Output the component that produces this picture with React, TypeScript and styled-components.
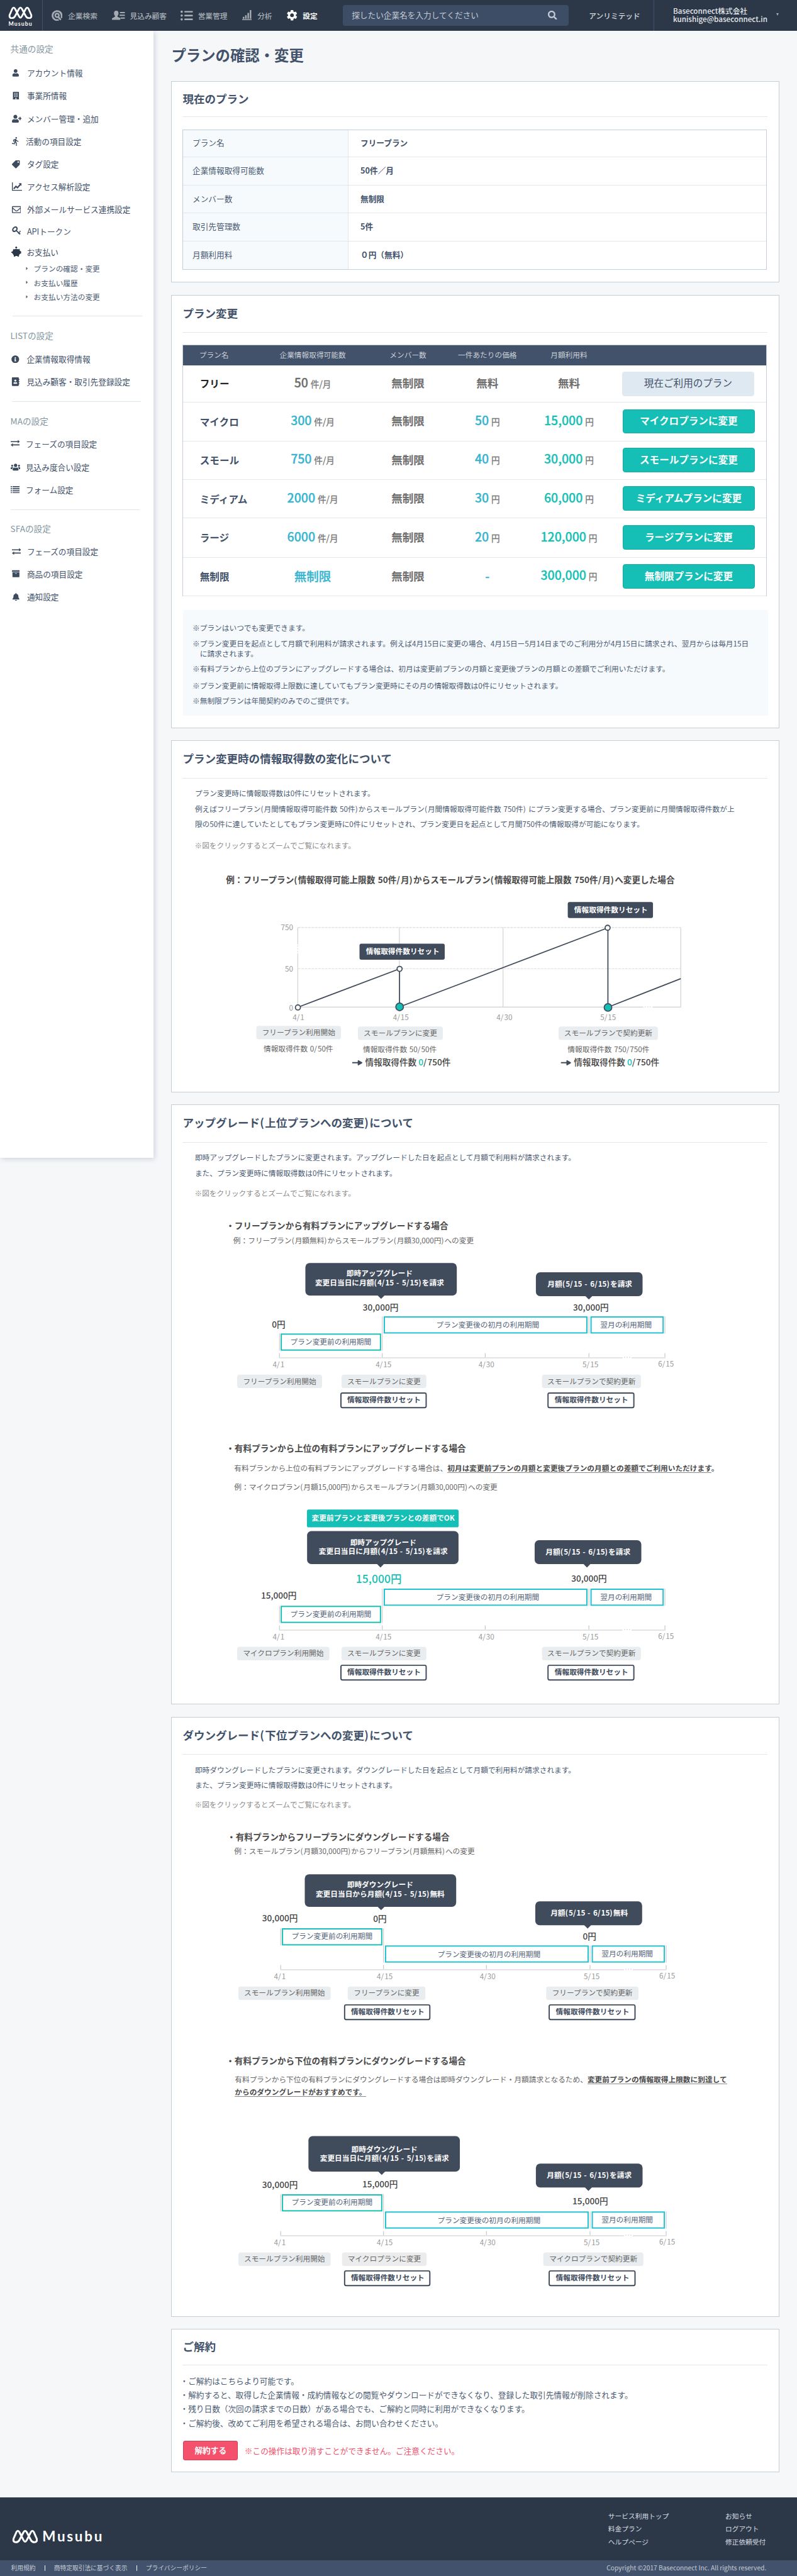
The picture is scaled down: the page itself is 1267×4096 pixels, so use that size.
import React from "react";
import styled, { createGlobalStyle } from "styled-components";
import {
  FaListUl, FaSearch, FaUser, FaBuilding, FaUserPlus, FaTag, FaRegEnvelope,
  FaInfoCircle, FaAddressBook, FaUsers, FaArchive, FaBell, FaCaretRight,
} from "react-icons/fa";
import { MdDirectionsRun, MdSettings } from "react-icons/md";

const FONT = '"Noto Sans CJK JP", "Noto Sans", sans-serif';
const NAVY = "#404b5c";
const TEAL = "#15bfb5";
const CYAN = "#1fc1d0";

const GlobalStyle = createGlobalStyle`
  html { background: #f5f7f9; }
  body { margin: 0; overflow: hidden; background: #f5f7f9; font-family: ${FONT}; }
  * { box-sizing: border-box; }
`;

const Page = styled.div`
  zoom: 0.9746;
  width: 1300px;
  font-family: ${FONT};
  font-size: 13px;
  color: #42526b;
  white-space: nowrap;
  svg { display: block; flex: none; }
`;

/* ---------- header ---------- */
const Header = styled.header`
  display: flex;
  align-items: center;
  height: 50px;
  background: #2c3848;
  color: #a9b0b8;
`;
const Brand = styled.div`
  display: flex;
  flex-direction: column;
  align-items: center;
  gap: 3px;
  width: 70px;
  height: 50px;
  padding: 10px 2px 0 0;
  border-right: 1px solid #42526b;
`;
const BrandName = styled.span`
  font: 700 9px/10px Lato, sans-serif;
  letter-spacing: 1.1px;
  color: #fff;
`;
const NavItem = styled.div<{ $ml: number; $gap: number; $active?: boolean }>`
  display: flex;
  align-items: center;
  gap: ${(p) => p.$gap}px;
  margin-left: ${(p) => p.$ml}px;
  font-size: 12px;
  line-height: 18px;
  font-weight: ${(p) => (p.$active ? 700 : 500)};
  color: ${(p) => (p.$active ? "#fff" : "#a9b0b8")};
`;
const SearchBox = styled.div`
  display: flex;
  align-items: center;
  justify-content: space-between;
  width: 369px;
  height: 34px;
  margin-left: 41px;
  padding: 0 19px 1px 15px;
  border-radius: 4px;
  background: #3d4d66;
  color: #c3cad3;
`;
const PlanName = styled.div`
  width: 138px;
  padding-left: 33px;
  font-size: 12px;
  font-weight: 500;
  color: #d3d8de;
`;
const Account = styled.div`
  display: flex;
  align-items: center;
  flex: 1;
  justify-content: space-between;
  height: 50px;
  padding: 0 30px 2px 31px;
  border-left: 1px solid #42526b;
  font-size: 12px;
  line-height: 14px;
  font-weight: 500;
  color: #e6e9ed;
`;
const Caret = styled.span`
  border: 3px solid transparent;
  border-top: 5px solid #a9a9a9;
  border-bottom: 0;
`;

/* ---------- frame ---------- */
const Body = styled.div`
  display: flex;
  align-items: flex-start;
  height: 4024px;
`;
const Sidebar = styled.nav`
  width: 250px;
  height: 1839px;
  padding-top: 20px;
  background: #fff;
  box-shadow: 2px 2px 8px rgba(60, 75, 95, 0.2);
  clip-path: inset(0 -12px -12px 0);
`;
const GroupTitle = styled.div<{ $mt: number }>`
  margin-top: ${(p) => p.$mt}px;
  padding-left: 17px;
  font-size: 14px;
  line-height: 20px;
  font-weight: 400;
  color: #82959f;
`;
const Item = styled.div<{ $mt: number; $x?: number }>`
  display: flex;
  align-items: center;
  height: 20px;
  margin-top: ${(p) => p.$mt}px;
  padding-left: ${(p) => p.$x ?? 19}px;
  line-height: 18px;
  color: #42526b;
`;
const IconSlot = styled.span`
  width: 25px;
  color: #3d4b5f;
`;
const TurnedTag = styled(FaTag)`
  transform: rotate(90deg);
`;
const SubItem = styled.div<{ $mt: number }>`
  display: flex;
  align-items: center;
  gap: 9px;
  height: 18px;
  margin-top: ${(p) => p.$mt}px;
  padding-left: 42px;
  font-size: 12px;
  color: #4b5b73;
  svg { width: 4px; }
`;
const Rule = styled.hr<{ $mt?: number; $x: number }>`
  width: 211px;
  height: 1px;
  margin: ${(p) => p.$mt ?? 22}px 0 0 ${(p) => p.$x}px;
  border: 0;
  background: #dde7ee;
`;
const Main = styled.main`
  width: 992px;
  margin-left: 29px;
`;
const PageTitle = styled.h1`
  height: 82px;
  margin: 0;
  font-size: 24px;
  line-height: 79px;
  font-weight: 700;
  padding-left: 0.5px;
`;
const Card = styled.section<{ $h: number }>`
  height: ${(p) => p.$h}px;
  margin-bottom: 20px;
  border: 1px solid #c2ced8;
  background: #fff;
`;
const CardHead = styled.h2<{ $h?: number }>`
  height: ${(p) => p.$h ?? 61}px;
  margin: 0 18px;
  border-bottom: 1px solid #dfe8ef;
  font-size: 18px;
  line-height: ${(p) => (p.$h ?? 61) - 3}px;
  font-weight: 700;
`;

/* ---------- current plan ---------- */
const InfoTable = styled.dl`
  display: grid;
  grid-template-columns: 269px 1fr;
  grid-template-rows: 45px 46px 45px 46px 45px;
  margin: 20px 19px 0 18px;
  border: 1px solid #c2ced8;
`;
const InfoLabel = styled.dt`
  display: flex;
  align-items: center;
  padding: 0 0 3px 15px;
  border-right: 1px solid #dfe8ef;
  background: #f6fafd;
  color: #4b5b73;
  &:not(:nth-last-of-type(1)) { border-bottom: 1px solid #dfe8ef; }
`;
const InfoValue = styled.dd`
  display: flex;
  align-items: center;
  margin: 0;
  padding: 0 0 3px 20px;
  font-weight: 700;
  &:not(:nth-last-of-type(1)) { border-bottom: 1px solid #dfe8ef; }
`;

/* ---------- plan table ---------- */
const PlanTable = styled.div`
  margin: 19px 19px 0 18px;
  border: solid #c2ced8;
  border-width: 1px 1px 0;
`;
const PlanRow = styled.div<{ $h: number; $head?: boolean }>`
  display: grid;
  grid-template-columns: 126px 170px 141px 118px 148px 1fr;
  align-items: center;
  justify-items: center;
  height: ${(p) => p.$h}px;
  ${(p) =>
    p.$head
      ? "background: #42526a; color: #c9cfd7; font-size: 12px; padding: 0 3px 2px 0;"
      : "border-bottom: 1px solid #dfe8ef;"}
`;
const PlanLabel = styled.div<{ $dark?: boolean; $small?: boolean }>`
  justify-self: start;
  padding-left: ${(p) => (p.$small ? 26 : 27)}px;
  font-size: ${(p) => (p.$small ? 12 : 16)}px;
  line-height: 24px;
  font-weight: ${(p) => (p.$small ? 400 : 700)};
  ${(p) => p.$dark && "color: #222;"}
`;
const Amount = styled.div<{ $c?: string; $size?: number }>`
  font-size: ${(p) => p.$size ?? 20}px;
  line-height: 30px;
  padding-bottom: 3px;
  font-weight: ${(p) => (p.$size ? 700 : 500)};
  color: ${(p) => p.$c ?? "#6e6e6e"};
  -webkit-text-stroke: ${(p) => (p.$size ? 0 : 0.3)}px;
`;
const Unit = styled.span`
  margin-left: 4px;
  font-size: 14px;
  font-weight: 400;
  color: #777;
`;
const PlanButton = styled.button<{ $current?: boolean }>`
  width: 215px;
  height: 40px;
  margin: 0 ${(p) => (p.$current ? "7px 0" : "5px 1px")} 0;
  padding: 0 0 2px;
  border: 1px solid ${(p) => (p.$current ? "#dfe9f2" : "#16aaa1")};
  border-radius: 4px;
  background: ${(p) => (p.$current ? "#dfe9f2" : TEAL)};
  color: ${(p) => (p.$current ? "#42526b" : "#fff")};
  font: ${(p) => (p.$current ? 400 : 700)} 16px/24px ${FONT};
`;
const Notes = styled.div`
  height: 173px;
  margin: 22px 17px 0 19px;
  padding: 21px 0 0 15px;
  background: #f6fafd;
  font-size: 12px;
  line-height: 16px;
  color: #4b5b73;
`;
const Note = styled.p<{ $mt?: number }>`
  margin: ${(p) => p.$mt ?? 0}px 0 0;
  padding-left: 12px;
  text-indent: -12px;
`;

/* ---------- explanations ---------- */
const Lead = styled.p`
  margin: 12px 0 0 38px;
  font-size: 12px;
  line-height: 25px;
  color: #4b5b73;
`;
const Hint = styled.p<{ $mt: number }>`
  margin: ${(p) => p.$mt}px 0 0 37.5px;
  font-size: 12px;
  line-height: 25px;
  color: #8c8c8c;
`;
const CaseTitle = styled.h3<{ $mt: number; $x?: number }>`
  margin: ${(p) => p.$mt}px 0 0 ${(p) => p.$x ?? 88.5}px;
  font-size: 14px;
  line-height: 20px;
  font-weight: 700;
  color: #4a4a4a;
`;
const CaseText = styled.p<{ $mt: number; $x?: number; $lh?: number }>`
  margin: ${(p) => p.$mt}px 0 0 ${(p) => p.$x ?? 102}px;
  font-size: 12px;
  line-height: ${(p) => p.$lh ?? 20}px;
  color: #666;
`;
const Strong = styled.b`
  font-weight: 700;
  color: #4a4a4a;
  box-shadow: inset 0 -1px #8a8a8a;
`;
const Bold = styled.b`
  font-weight: 700;
  color: #4a4a4a;
`;
const Loose = styled.span`
  letter-spacing: 0.09em;
`;

/* ---------- cancel ---------- */
const CancelList = styled.ul`
  margin: 14px 0 0 14px;
  padding: 0;
  list-style: none;
  line-height: 23px;
  color: #4b5b73;
`;
const CancelRow = styled.div`
  display: flex;
  align-items: center;
  gap: 11px;
  margin: 17px 0 0 19px;
  color: #f4516c;
`;
const CancelButton = styled.button`
  width: 89px;
  height: 32px;
  padding: 0 0 1px;
  border: 1px solid #cf3f59;
  border-radius: 3px;
  background: #f4516c;
  color: #fff;
  font: 700 13px/20px ${FONT};
`;

/* ---------- footer ---------- */
const Footer = styled.footer`
  display: flex;
  justify-content: space-between;
  height: 103px;
  padding: 22px 0 0 20px;
  background: #2c3848;
  color: #d8dce1;
`;
const FooterBrand = styled.div`
  display: flex;
  align-items: center;
  gap: 6px;
  height: 64px;
  padding-top: 20px;
  align-self: flex-start;
`;
const FooterName = styled.span`
  font: 700 23px/26px Lato, sans-serif;
  letter-spacing: 2.8px;
  color: #fff;
`;
const FooterLinks = styled.div`
  display: grid;
  grid-template-columns: 191px 117px;
  grid-auto-rows: 21px;
  font-size: 11px;
  line-height: 18px;
`;
const LegalBar = styled.div`
  display: flex;
  align-items: center;
  height: 27px;
  padding: 0 50px 3px 18px;
  background: #42526c;
  font-size: 10px;
  color: #c3cad3;
`;
const LegalLink = styled.span`
  & + & {
    margin-left: 15px;
    padding-left: 15px;
    background: linear-gradient(#fff, #fff) 0 60% / 1px 9px no-repeat;
  }
`;
const Copyright = styled.span`
  margin-left: auto;
  font-size: 10.5px;
`;

/* ---------- icons ---------- */
const Mark = ({ w }: { w: number }) => (
  <svg width={w} height={(w * 23) / 44} viewBox="0 0 44 23" fill="none" stroke="#fff" strokeWidth="3.2" strokeLinejoin="round">
    <path d="M2.6 15.5 7.4 4.5Q9.8.2 12.4 4.5L19.4 18Q22 22.8 24.6 18L31.6 4.5Q34.2.2 36.6 4.5L41.4 15.5Q42.5 21.3 37.5 21.3Q33.5 21.3 31.5 17.5L24.6 4.5Q22 .2 19.4 4.5L12.5 17.5Q10.5 21.3 6.5 21.3Q1.5 21.3 2.6 15.5Z" />
  </svg>
);
const CompanyIcon = () => (
  <svg width="18" height="18" viewBox="0 0 18 18" fill="none" stroke="#a4abb3">
    <path d="M11.5 16A7.4 7.4 0 1 1 16.4 9V13" strokeWidth="2.9" />
    <circle cx="9" cy="8.6" r="3" strokeWidth="2.6" />
    <path d="M10.6 10.8 15 16" strokeWidth="2.8" />
  </svg>
);
const LeadIcon = () => (
  <svg width="21" height="16" viewBox="0 0 21 16" fill="#a4abb3">
    <path d="M7 0c2.4 0 3.7 1.7 3.7 4S9.6 7.800 9 8.600c0 1.600 0 1.800 4.600 3.400V15H0v-2.500c4-2 5-2 5-3.900C4.300 7.800 3.300 6.300 3.300 4S4.600 0 7 0ZM13 2h8v2.200h-8zM12.400 6.400H21v2.200h-8.600zM14 11h7v2.200h-7z" />
  </svg>
);
const BarsIcon = () => (
  <svg width="16" height="17" viewBox="0 0 16 17" fill="#a4abb3">
    <path d="M1 11h2.500v3H1zM4.800 8.500h2.500V14H4.800zM8.600 4.500h2.500V14H8.600zM12.400 0h2.500v14h-2.500zM0 15h16v1.500H0z" />
  </svg>
);
const GrowthIcon = () => (
  <svg width="17" height="14" viewBox="0 0 17 14" fill="none" stroke="currentColor">
    <path d="M.7 0v13H17" strokeWidth="1.400" />
    <path d="M3 10.500 6.500 6.500 9 8.600 13.500 3.600" strokeWidth="2.300" />
    <path d="M10.800 1.200h4.700v4.700z" fill="currentColor" stroke="none" />
  </svg>
);
const KeyIcon = () => (
  <svg width="15" height="14" viewBox="0 0 15 14" fill="none" stroke="currentColor">
    <ellipse cx="4.800" cy="4.600" rx="4" ry="2.900" transform="rotate(-48 4.800 4.600)" strokeWidth="2.200" />
    <path d="M6.800 6.500 13.500 12.800M10.500 12l2-2.300M12.500 9l1.300-1.500" strokeWidth="1.900" />
  </svg>
);
const PiggyIcon = () => (
  <svg width="17" height="17" viewBox="0 0 17 17" fill="#2c3848">
    <circle cx="8" cy="1.600" r="1.600" />
    <path d="M3 4l1.800.5Q8 3 11.400 4.500L13.600 3.700V6.500L16 8.300V11L13.700 12.200 12.500 14V16.500H10V15.300H6.500V16.500H4V14Q2.300 12.600 2 11L0 10V8.500L2 8.200Q2.200 7 3 6Z" />
  </svg>
);
const SwapIcon = () => (
  <svg width="15" height="12" viewBox="0 0 15 12" fill="currentColor">
    <path d="M0 2.500h11.500V.5L15 3.400 11.500 6V4.200H0zM15 7.800H3.500V6L0 8.800l3.500 2.700V9.600H15z" />
  </svg>
);
const RowsIcon = () => (
  <svg width="15" height="12" viewBox="0 0 15 12" fill="currentColor">
    <path d="M0 0h2v1.800H0zM3 0h12v1.800H3zM0 3.300h2v1.800H0zM3 3.300h12v1.800H3zM0 6.600h2v1.800H0zM3 6.600h12v1.800H3zM0 10h2v1.800H0zM3 10h12v1.800H3z" />
  </svg>
);

/* Parentheses, slashes, hyphens and spaces are set slightly loose beside kanji. */
const pieces = (text: string) => text.split(/([()/\- ]+)/).filter(Boolean);
const isLoose = (s: string) => /^[()/\- ]/.test(s);
const Mixed = ({ children }: { children: string }) => (
  <>
    {pieces(children).map((s, i) => (isLoose(s) ? <Loose key={i}>{s}</Loose> : s))}
  </>
);

/* ---------- figures ---------- */
type TextProps = { x: number; y: number; s?: number; w?: number; c?: string; a?: "start" | "middle" | "end"; children: React.ReactNode };
/* y is the optical centre of the line */
const T = ({ x, y, s = 12, w = 400, c = "#666", a = "middle", children }: TextProps) => (
  <text x={x} y={y + s * 0.37} fontSize={s} fontWeight={w} fill={c} textAnchor={a} fontFamily={FONT}>
    {typeof children === "string"
      ? pieces(children).map((t, i) => (
          <tspan key={i} letterSpacing={isLoose(t) ? s * 0.09 : 0}>{t}</tspan>
        ))
      : children}
  </text>
);
const Tag = ({ x, y, w, h = 22, label, bg = "#e9edf0" }: { x: number; y: number; w: number; h?: number; label: string; bg?: string }) => (
  <g>
    <rect x={x} y={y} width={w} height={h} rx="4" fill={bg} />
    <T x={x + w / 2} y={y + h / 2 - 0.2}>{label}</T>
  </g>
);
const ResetBox = ({ x, y, w }: { x: number; y: number; w: number }) => (
  <g>
    <rect x={x + 1} y={y + 1} width={w - 2} height="24" rx="2.500" fill="#fff" stroke={NAVY} strokeWidth="2" />
    <T x={x + w / 2 + 0.8} y={y + 12.3} w={700} c={NAVY}>情報取得件数リセット</T>
  </g>
);
const ResetBadge = ({ x, y }: { x: number; y: number }) => (
  <g>
    <rect x={x} y={y} width="139" height="26" rx="3" fill={NAVY} />
    <T x={x + 70.5} y={y + 12.3} w={700} c="#fff">情報取得件数リセット</T>
  </g>
);
type CalloutData = { x: number; y: number; w: number; h: number; tip: number; tx: number; lines: string[]; ty: number };
const Callout = ({ x, y, w, h, tip, tx, lines, ty }: CalloutData) => (
  <g>
    <rect x={x} y={y} width={w} height={h} rx="7" fill={NAVY} />
    <path d={`M${tip - 6} ${y + h - 0.5}h12l-6 6z`} fill={NAVY} />
    {lines.map((l, i) => (
      <T key={i} x={tx} y={ty + i * 15} w={700} c="#fff">{l}</T>
    ))}
  </g>
);
type Price = { x: number; y: number; label: string; big?: boolean };
type TimelineProps = {
  top: number;
  height: number;
  axis: number;
  dx?: number;
  down?: boolean;
  badge?: string;
  callouts: CalloutData[];
  prices: Price[];
  tags: { x: number; w: number; label: string; bg?: string }[];
  resets: [number, number][];
};
const Timeline = ({ top, height, axis, dx = 0, down, badge, callouts, prices, tags, resets }: TimelineProps) => {
  const upper = axis - 68;
  const lower = axis - 40;
  const before = down ? upper : lower;
  const after = down ? lower : upper;
  return (
    <svg width="990" height={height} viewBox={`280 ${top} 990 ${height}`}>
      {badge && (
        <g>
          <rect x="500.500" y="2463" width="247.500" height="29" rx="3" fill={TEAL} />
          <T x={625} y={2477.2} w={700} c="#fff">{badge}</T>
        </g>
      )}
      {callouts.map((c, i) => <Callout key={i} {...c} />)}
      {prices.map((p, i) => (
        <T key={i} x={p.x} y={p.y} s={p.big ? 18 : 14} w={500} c={p.big ? TEAL : "#444"}>{p.label}</T>
      ))}
      <g transform={`translate(${dx} 0)`}>
        <g stroke="#c4c4c4" strokeWidth="1">
          <path d={`M455.700 ${before}v28M623.500 ${upper}v56M960.400 ${after}v28M1084.500 ${after}v28`} />
          <path d={`M455.700 ${axis - 8}v8M623.500 ${axis - 8}v8M791.300 ${axis - 8}v8M960.400 ${axis - 8}v8M1084.500 ${axis - 8}v8`} stroke="#bbb" />
        </g>
        <path d={`M455.200 ${axis - 0.3}H1015.500M1030 ${axis - 0.3}H1085`} stroke="#e4e4e4" strokeWidth="2" />
        <path d={`M1018 ${axis - 1}h10`} stroke="#ddd" strokeWidth="1.600" strokeDasharray="1.800 2.200" />
        <g fill="#fff" strokeWidth="2">
          <rect x="458.700" y={before + 1} width="161.800" height="26" stroke={TEAL} />
          <rect x="626.800" y={after + 1} width="330.400" height="26" stroke={CYAN} />
          <rect x="964" y={after + 1} width="117.500" height="26" stroke={CYAN} />
        </g>
        <T x={539.5} y={before + 13.4} c="#54647b">プラン変更前の利用期間</T>
        <T x={795.5} y={after + 14.4} c="#54647b">プラン変更後の初月の利用期間</T>
        <T x={1021} y={after + 13.6} c="#54647b">翌月の利用期間</T>
        <T x={454.3} y={axis + 10.4} c="#999">4/1</T>
        <T x={625.5} y={axis + 10.4} c="#999">4/15</T>
        <T x={793.3} y={axis + 10.4} c="#999">4/30</T>
        <T x={963} y={axis + 10.4} c="#999">5/15</T>
        <T x={1086.2} y={axis + 9.6} c="#999">6/15</T>
      </g>
      {tags.map((t, i) => <Tag key={i} x={t.x} y={axis + 27} w={t.w} label={t.label} bg={t.bg} />)}
      {resets.map(([x, w], i) => <ResetBox key={i} x={x} y={axis + 56} w={w} />)}
    </svg>
  );
};

const UsageChart = () => (
  <svg width="990" height="330" viewBox="280 1445 990 330">
    <g stroke="#c9c9c9" strokeWidth="1">
      <path d="M485.500 1513.500V1541M485.500 1556V1643M651.300 1513.500V1643M820.500 1513.500V1643M1110.300 1513.500V1643" />
      <path d="M485.500 1543V1556" strokeDasharray="1.500 3" />
    </g>
    <path d="M485.500 1643.300H1049M1064.500 1643.300H1110.500" stroke="#c4c4c4" strokeWidth="1.200" />
    <path d="M1051.500 1643H1063" stroke="#ddd" strokeWidth="1.600" strokeDasharray="1.800 2.200" />
    <path d="M486 1513.700H1110M486 1580.700H1110" stroke="#dcdcdc" strokeWidth="1.200" strokeDasharray="4 1.500" />
    <path d="M486 1643.500 651.600 1581V1643L991.500 1514V1643.500L1110.300 1597" fill="none" stroke={NAVY} strokeWidth="1.800" />
    <g fill="#fff" stroke={NAVY} strokeWidth="1.800">
      <circle cx="485.800" cy="1644" r="4.100" />
      <circle cx="651.700" cy="1581" r="4.100" />
      <circle cx="991" cy="1514" r="4.100" />
      <circle cx="651.700" cy="1643" r="6.200" fill={TEAL} />
      <circle cx="991.600" cy="1644" r="6.200" fill={TEAL} />
    </g>
    <ResetBadge x={586.3} y={1540} />
    <ResetBadge x={926} y={1472} />
    <T x={478} y={1513.7} a="end" c="#999">750</T>
    <T x={478} y={1580.7} a="end" c="#999">50</T>
    <T x={478} y={1644.7} a="end" c="#999">0</T>
    <T x={486.7} y={1659.7} c="#999">4/1</T>
    <T x={653.7} y={1659.7} c="#999">4/15</T>
    <T x={822.7} y={1659.7} c="#999">4/30</T>
    <T x={991.8} y={1659.7} c="#999">5/15</T>
    <Tag x={418} y={1674} w={138} label="フリープラン利用開始" />
    <Tag x={583.7} y={1675} w={138.6} label="スモールプランに変更" />
    <Tag x={911} y={1675} w={162} label="スモールプランで契約更新" />
    <T x={486.5} y={1711.6}>情報取得件数 0/50件</T>
    <T x={652} y={1712.5}>情報取得件数 50/50件</T>
    <T x={992.5} y={1712.5}>情報取得件数 750/750件</T>
    {[574.4, 914.8].map((x) => (
      <g key={x}>
        <path d={`M${x} 1734.200h12M${x + 10} 1731l5.500 3.200-5.500 3.200z`} fill={NAVY} stroke={NAVY} strokeWidth="2" strokeLinejoin="round" />
        <T x={x + 21} y={1733.8} s={14} w={500} c="#444" a="start">
          情報取得件数 <tspan fill={TEAL}>0</tspan><tspan letterSpacing="1.200">/</tspan>750件
        </T>
      </g>
    ))}
  </svg>
);

const plans = [
  { name: "マイクロ", h: 63, count: "300", price: "50", total: "15,000" },
  { name: "スモール", h: 63, count: "750", price: "40", total: "30,000" },
  { name: "ミディアム", h: 63, count: "2000", price: "30", total: "60,000" },
  { name: "ラージ", h: 64, count: "6000", price: "20", total: "120,000" },
  { name: "無制限", h: 63, count: "", price: "", total: "300,000" },
];

const current = [
  ["プラン名", "フリープラン"],
  ["企業情報取得可能数", "50件／月"],
  ["メンバー数", "無制限"],
  ["取引先管理数", "5件"],
  ["月額利用料", "０円（無料）"],
];

export default function App() {
  return (
    <Page>
      <GlobalStyle />
      <Header>
        <Brand>
          <Mark w={40} />
          <BrandName>Musubu</BrandName>
        </Brand>
        <NavItem $ml={14} $gap={9}><CompanyIcon />企業検索</NavItem>
        <NavItem $ml={24} $gap={8}><LeadIcon />見込み顧客</NavItem>
        <NavItem $ml={23} $gap={8}><FaListUl size={20} />営業管理</NavItem>
        <NavItem $ml={24} $gap={9}><BarsIcon />分析</NavItem>
        <NavItem $ml={22} $gap={7} $active><MdSettings size={21} />設定</NavItem>
        <SearchBox>
          探したい企業名を入力してください
          <FaSearch size={15} />
        </SearchBox>
        <PlanName>アンリミテッド</PlanName>
        <Account>
          <div>
            Baseconnect株式会社
            <br />
            kunishige@baseconnect.in
          </div>
          <Caret />
        </Account>
      </Header>

      <Body>
        <Sidebar>
          <GroupTitle $mt={0}>共通の設定</GroupTitle>
          <Item $mt={19}><IconSlot><FaUser size={12} /></IconSlot>アカウント情報</Item>
          <Item $mt={17}><IconSlot><FaBuilding size={13} /></IconSlot>事業所情報</Item>
          <Item $mt={18}><IconSlot><FaUserPlus size={16} /></IconSlot>メンバー管理・追加</Item>
          <Item $mt={17} $x={17}><IconSlot><MdDirectionsRun size={16} /></IconSlot>活動の項目設定</Item>
          <Item $mt={17}><IconSlot><TurnedTag size={13} /></IconSlot>タグ設定</Item>
          <Item $mt={17}><IconSlot><GrowthIcon /></IconSlot>アクセス解析設定</Item>
          <Item $mt={17}><IconSlot><FaRegEnvelope size={15} /></IconSlot>外部メールサービス連携設定</Item>
          <Item $mt={15}><IconSlot><KeyIcon /></IconSlot>APIトークン</Item>
          <Item $mt={14} $x={18.5}><IconSlot><PiggyIcon /></IconSlot>お支払い</Item>
          <SubItem $mt={8}><FaCaretRight size={8} />プランの確認・変更</SubItem>
          <SubItem $mt={5}><FaCaretRight size={8} />お支払い履歴</SubItem>
          <SubItem $mt={5}><FaCaretRight size={8} />お支払い方法の変更</SubItem>
          <Rule $mt={22} $x={21} />
          <GroupTitle $mt={22}>LISTの設定</GroupTitle>
          <Item $mt={18} $x={18.5}><IconSlot><FaInfoCircle size={13} /></IconSlot>企業情報取得情報</Item>
          <Item $mt={17} $x={18.5}><IconSlot><FaAddressBook size={14} /></IconSlot>見込み顧客・取引先登録設定</Item>
          <Rule $x={19} />
          <GroupTitle $mt={21}>MAの設定</GroupTitle>
          <Item $mt={17} $x={17}><IconSlot><SwapIcon /></IconSlot>フェーズの項目設定</Item>
          <Item $mt={18} $x={17}><IconSlot><FaUsers size={16} /></IconSlot>見込み度合い設定</Item>
          <Item $mt={17} $x={17}><IconSlot><RowsIcon /></IconSlot>フォーム設定</Item>
          <Rule $x={17} />
          <GroupTitle $mt={21}>SFAの設定</GroupTitle>
          <Item $mt={17}><IconSlot><SwapIcon /></IconSlot>フェーズの項目設定</Item>
          <Item $mt={17}><IconSlot><FaArchive size={13} /></IconSlot>商品の項目設定</Item>
          <Item $mt={17}><IconSlot><FaBell size={13} /></IconSlot>通知設定</Item>
        </Sidebar>

        <Main>
          <PageTitle>プランの確認・変更</PageTitle>

          <Card $h={329}>
            <CardHead $h={58}>現在のプラン</CardHead>
            <InfoTable>
              {current.map(([k, v]) => (
                <React.Fragment key={k}>
                  <InfoLabel>{k}</InfoLabel>
                  <InfoValue>{v}</InfoValue>
                </React.Fragment>
              ))}
            </InfoTable>
          </Card>

          <Card $h={707}>
            <CardHead>プラン変更</CardHead>
            <PlanTable>
              <PlanRow $h={33} $head>
                <PlanLabel $small>プラン名</PlanLabel>
                <span>企業情報取得可能数</span>
                <span>メンバー数</span>
                <span>一件あたりの価格</span>
                <span>月額利用料</span>
              </PlanRow>
              <PlanRow $h={61}>
                <PlanLabel $dark>フリー</PlanLabel>
                <Amount>50<Unit>件/月</Unit></Amount>
                <Amount $size={18}>無制限</Amount>
                <Amount $size={18}>無料</Amount>
                <Amount $size={18}>無料</Amount>
                <PlanButton $current>現在ご利用のプラン</PlanButton>
              </PlanRow>
              {plans.map((p) => (
                <PlanRow key={p.name} $h={p.h}>
                  <PlanLabel>{p.name}</PlanLabel>
                  <Amount $c="#37b4d0">{p.count ? <>{p.count}<Unit>件/月</Unit></> : "無制限"}</Amount>
                  <Amount $size={18}>無制限</Amount>
                  <Amount $c="#37b4d0">{p.price ? <>{p.price}<Unit>円</Unit></> : "-"}</Amount>
                  <Amount $c={TEAL}>{p.total}<Unit>円</Unit></Amount>
                  <PlanButton>{p.name}プランに変更</PlanButton>
                </PlanRow>
              ))}
            </PlanTable>
            <Notes>
              <Note>※プランはいつでも変更できます。</Note>
              <Note $mt={9.5}>
                ※プラン変更日を起点として月額で利用料が請求されます。例えば4月15日に変更の場合、4月15日ー5月14日までのご利用分が4月15日に請求され、翌月からは毎月15日
                <br />
                に請求されます。
              </Note>
              <Note $mt={9.5}>※有料プランから上位のプランにアップグレードする場合は、初月は変更前プランの月額と変更後プランの月額との差額でご利用いただけます。</Note>
              <Note $mt={11}>※プラン変更前に情報取得上限数に達していてもプラン変更時にその月の情報取得数は0件にリセットされます。</Note>
              <Note $mt={9}>※無制限プランは年間契約のみでのご提供です。</Note>
            </Notes>
          </Card>

          <Card $h={574}>
            <CardHead>プラン変更時の情報取得数の変化について</CardHead>
            <Lead>
              プラン変更時に情報取得数は0件にリセットされます。
              <br />
              <Mixed>例えばフリープラン(月間情報取得可能件数 50件)からスモールプラン(月間情報取得可能件数 750件) にプラン変更する場合、プラン変更前に月間情報取得件数が上</Mixed>
              <br />
              限の50件に達していたとしてもプラン変更時に0件にリセットされ、プラン変更日を起点として月間750件の情報取得が可能になります。
            </Lead>
            <Hint $mt={10}>※図をクリックするとズームでご覧になれます。</Hint>
            <CaseTitle $mt={33}>
              <Mixed>例：フリープラン(情報取得可能上限数 50件/月)からスモールプラン(情報取得可能上限数 750件/月)へ変更した場合</Mixed>
            </CaseTitle>
            <UsageChart />
          </Card>

          <Card $h={979}>
            <CardHead><Mixed>アップグレード(上位プランへの変更)について</Mixed></CardHead>
            <Lead>
              即時アップグレードしたプランに変更されます。アップグレードした日を起点として月額で利用料が請求されます。
              <br />
              また、プラン変更時に情報取得数は0件にリセットされます。
            </Lead>
            <Hint $mt={8}>※図をクリックするとズームでご覧になれます。</Hint>
            <CaseTitle $mt={31}>・フリープランから有料プランにアップグレードする場合</CaseTitle>
            <CaseText $mt={3} $x={100.5}><Mixed>例：フリープラン(月額無料)からスモールプラン(月額30,000円)への変更</Mixed></CaseText>
            <Timeline
              top={2033}
              height={297}
              axis={2216}
              callouts={[
                { x: 498, y: 2061, w: 247, h: 53, tip: 621.5, tx: 619, ty: 2078.2, lines: ["即時アップグレード", "変更日当日に月額(4/15 - 5/15)を請求"] },
                { x: 874, y: 2076, w: 174, h: 39, tip: 960.4, tx: 962, ty: 2095, lines: ["月額(5/15 - 6/15)を請求"] },
              ]}
              prices={[
                { x: 454.5, y: 2161, label: "0円" },
                { x: 620.7, y: 2134, label: "30,000円" },
                { x: 963.7, y: 2134, label: "30,000円" },
              ]}
              tags={[
                { x: 386.7, w: 138.6, label: "フリープラン利用開始" },
                { x: 557, w: 138.3, label: "スモールプランに変更" },
                { x: 884, w: 161.3, label: "スモールプランで契約更新" },
              ]}
              resets={[[555, 141], [892.8, 142]]}
            />
            <CaseTitle $mt={23}>・有料プランから上位の有料プランにアップグレードする場合</CaseTitle>
            <CaseText $mt={12}>
              有料プランから上位の有料プランにアップグレードする場合は、<Strong>初月は変更前プランの月額と変更後プランの月額との差額でご利用いただけます</Strong><Bold>。</Bold>
            </CaseText>
            <CaseText $mt={11}><Mixed>例：マイクロプラン(月額15,000円)からスモールプラン(月額30,000円)への変更</Mixed></CaseText>
            <Timeline
              top={2436}
              height={330}
              axis={2660}
              badge="変更前プランと変更後プランとの差額でOK"
              callouts={[
                { x: 500.8, y: 2498, w: 247, h: 54, tip: 620.5, tx: 625, ty: 2516.3, lines: ["即時アップグレード", "変更日当日に月額(4/15 - 5/15)を請求"] },
                { x: 872, y: 2513, w: 174, h: 39, tip: 957.3, tx: 959, ty: 2532.5, lines: ["月額(5/15 - 6/15)を請求"] },
              ]}
              prices={[
                { x: 454.6, y: 2603, label: "15,000円" },
                { x: 617.8, y: 2575.7, label: "15,000円", big: true },
                { x: 960.8, y: 2576, label: "30,000円" },
              ]}
              tags={[
                { x: 386.7, w: 150.5, label: "マイクロプラン利用開始" },
                { x: 557, w: 138.3, label: "スモールプランに変更" },
                { x: 884, w: 161.3, label: "スモールプランで契約更新" },
              ]}
              resets={[[555, 141], [892.8, 142]]}
            />
          </Card>

          <Card $h={979}>
            <CardHead><Mixed>ダウングレード(下位プランへの変更)について</Mixed></CardHead>
            <Lead>
              即時ダウングレードしたプランに変更されます。ダウングレードした日を起点として月額で利用料が請求されます。
              <br />
              また、プラン変更時に情報取得数は0件にリセットされます。
            </Lead>
            <Hint $mt={7}>※図をクリックするとズームでご覧になれます。</Hint>
            <CaseTitle $mt={30} $x={90.5}>・有料プランからフリープランにダウングレードする場合</CaseTitle>
            <CaseText $mt={3}><Mixed>例：スモールプラン(月額30,000円)からフリープラン(月額無料)への変更</Mixed></CaseText>
            <Timeline
              top={3030}
              height={300}
              axis={3214}
              dx={2}
              down
              callouts={[
                { x: 497, y: 3058, w: 247, h: 53, tip: 621.5, tx: 620, ty: 3075.2, lines: ["即時ダウングレード", "変更日当日から月額(4/15 - 5/15)無料"] },
                { x: 873, y: 3102, w: 174.3, h: 39, tip: 958.4, tx: 961, ty: 3121, lines: ["月額(5/15 - 6/15)無料"] },
              ]}
              prices={[
                { x: 456.6, y: 3129.8, label: "30,000円" },
                { x: 619.5, y: 3130.7, label: "0円" },
                { x: 961.5, y: 3159.6, label: "0円" },
              ]}
              tags={[
                { x: 388.7, w: 150.5, label: "スモールプラン利用開始" },
                { x: 567, w: 126.8, label: "フリープランに変更" },
                { x: 890.8, w: 150.5, label: "フリープランで契約更新" },
              ]}
              resets={[[561, 141], [894.7, 142]]}
            />
            <CaseTitle $mt={22}>・有料プランから下位の有料プランにダウングレードする場合</CaseTitle>
            <CaseText $mt={10} $lh={21} $x={103}>
              有料プランから下位の有料プランにダウングレードする場合は即時ダウングレード・月額請求となるため、<Strong>変更前プランの情報取得上限数に到達して</Strong>
              <br />
              <Strong>からのダウングレードがおすすめです。</Strong>
            </CaseText>
            <Timeline
              top={3424}
              height={340}
              axis={3648}
              dx={2}
              down
              callouts={[
                { x: 503, y: 3485, w: 247, h: 58, tip: 622.5, tx: 627, ty: 3506.3, lines: ["即時ダウングレード", "変更日当日に月額(4/15 - 5/15)を請求"] },
                { x: 874, y: 3530, w: 174, h: 39, tip: 959.7, tx: 961, ty: 3549, lines: ["月額(5/15 - 6/15)を請求"] },
              ]}
              prices={[
                { x: 456.6, y: 3565, label: "30,000円" },
                { x: 619.8, y: 3563, label: "15,000円" },
                { x: 962.7, y: 3591, label: "15,000円" },
              ]}
              tags={[
                { x: 388.7, w: 150.5, label: "スモールプラン利用開始" },
                { x: 557.8, w: 138, label: "マイクロプランに変更", bg: "#ececec" },
                { x: 886, w: 163.3, label: "マイクロプランで契約更新" },
              ]}
              resets={[[561, 141], [894.7, 142]]}
            />
          </Card>

          <Card $h={234}>
            <CardHead $h={58}>ご解約</CardHead>
            <CancelList>
              <li>・ご解約はこちらより可能です。</li>
              <li>・解約すると、取得した企業情報・成約情報などの閲覧やダウンロードができなくなり、登録した取引先情報が削除されます。</li>
              <li>・残り日数（次回の請求までの日数）がある場合でも、ご解約と同時に利用ができなくなります。</li>
              <li>・ご解約後、改めてご利用を希望される場合は、お問い合わせください。</li>
            </CancelList>
            <CancelRow>
              <CancelButton>解約する</CancelButton>
              ※この操作は取り消すことができません。ご注意ください。
            </CancelRow>
          </Card>
        </Main>
      </Body>

      <Footer>
        <FooterBrand>
          <Mark w={43} />
          <FooterName>Musubu</FooterName>
        </FooterBrand>
        <FooterLinks>
          <span>サービス利用トップ</span>
          <span>お知らせ</span>
          <span>料金プラン</span>
          <span>ログアウト</span>
          <span>ヘルプページ</span>
          <span>修正依頼受付</span>
        </FooterLinks>
      </Footer>
      <LegalBar>
        <LegalLink>利用規約</LegalLink>
        <LegalLink>商特定取引法に基づく表示</LegalLink>
        <LegalLink>プライバシーポリシー</LegalLink>
        <Copyright>Copyright ©2017 Baseconnect Inc. All rights reserved.</Copyright>
      </LegalBar>
    </Page>
  );
}
